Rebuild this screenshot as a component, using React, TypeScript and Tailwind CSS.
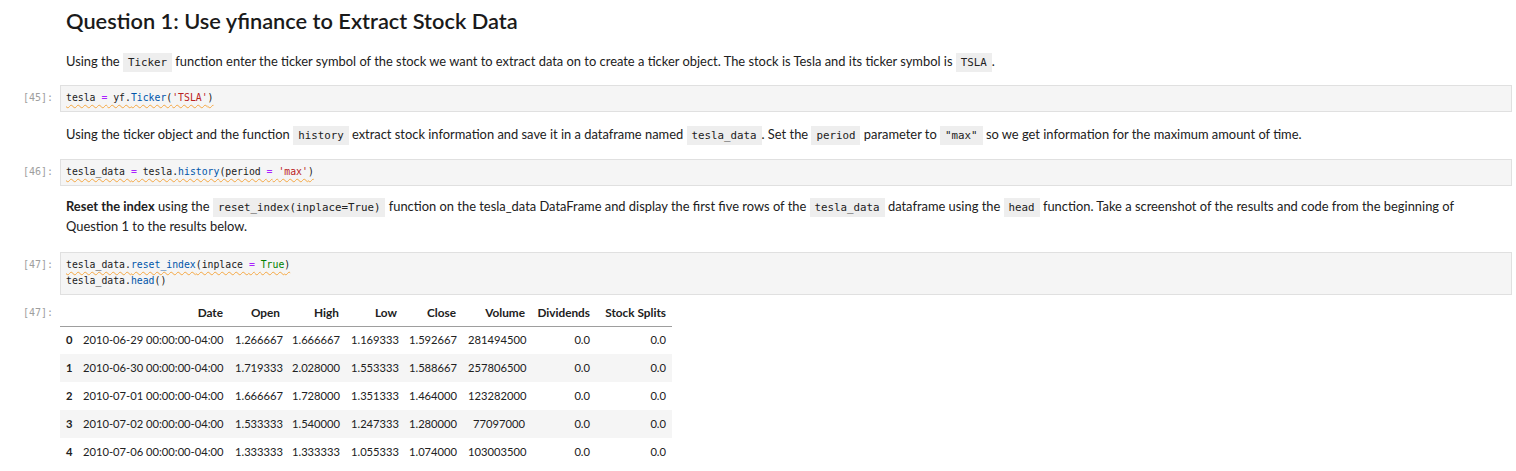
import { ReactNode } from "react";

// notebook-ish bits
const Chip = ({ children }: { children: ReactNode }) => (
  <code className="bg-[#eeeeee] px-[5px] py-[3px] font-['DejaVu_Sans_Mono',monospace] text-[10.8px] leading-none text-[#212121]">
    {children}
  </code>
);

const Prompt = ({ n }: { n: number }) => (
  <div className="w-[60px] shrink-0 pr-[7px] text-right font-['DejaVu_Sans_Mono',monospace] text-[10px] leading-[16px] text-[#9e9e9e]">
    [{n}]:
  </div>
);

const Lint = ({ children }: { children: ReactNode }) => (
  <span className="underline decoration-wavy decoration-[#f5a742] decoration-1 underline-offset-[3px]">
    {children}
  </span>
);

const Op = ({ children }: { children: ReactNode }) => (
  <span className="text-[#aa22ff]">{children}</span>
);
const Prop = ({ children }: { children: ReactNode }) => (
  <span className="text-[#0055aa]">{children}</span>
);
const Str = ({ children }: { children: ReactNode }) => (
  <span className="text-[#ba2121]">{children}</span>
);
const Kw = ({ children }: { children: ReactNode }) => (
  <span className="text-[#008000]">{children}</span>
);

const CodeCell = ({ n, lines }: { n: number; lines: ReactNode[] }) => (
  <div className="flex items-start">
    <div className="pt-[5px]">
      <Prompt n={n} />
    </div>
    <div className="flex-1 bg-[#f5f5f5] border border-[#e0e0e0] px-[5px] pt-[4px] pb-[5px] font-['DejaVu_Sans_Mono',monospace] text-[9.8px] leading-[16px] text-[#212121] whitespace-pre">
      {lines.map((l, i) => (
        <div key={i}>{l}</div>
      ))}
    </div>
  </div>
);

const rows = [
  ["0", "2010-06-29 00:00:00-04:00", "1.266667", "1.666667", "1.169333", "1.592667", "281494500", "0.0", "0.0"],
  ["1", "2010-06-30 00:00:00-04:00", "1.719333", "2.028000", "1.553333", "1.588667", "257806500", "0.0", "0.0"],
  ["2", "2010-07-01 00:00:00-04:00", "1.666667", "1.728000", "1.351333", "1.464000", "123282000", "0.0", "0.0"],
  ["3", "2010-07-02 00:00:00-04:00", "1.533333", "1.540000", "1.247333", "1.280000", "77097000", "0.0", "0.0"],
  ["4", "2010-07-06 00:00:00-04:00", "1.333333", "1.333333", "1.055333", "1.074000", "103003500", "0.0", "0.0"],
];

const headers = ["", "Date", "Open", "High", "Low", "Close", "Volume", "Dividends", "Stock Splits"];
const widths = ["w-[18px]", "w-[151px]", "w-[57px]", "w-[59px]", "w-[58px]", "w-[59px]", "w-[69px]", "w-[65px]", "w-[76px]"];

export default function App() {
  return (
    <div className="w-[1516px] h-[471px] overflow-hidden bg-white pt-[7px] pr-[4px] font-['Lato',sans-serif] text-[#212121]">
      {/* heading */}
      <div className="pl-[66px]">
        <h2 className="text-[21.8px] leading-[28px] font-semibold text-[#1a1a1a]">
          Question 1: Use yfinance to Extract Stock Data
        </h2>
      </div>

      <p className="pl-[66px] mt-[16px] text-[12.9px] leading-[20px]">
        Using the <Chip>Ticker</Chip> function enter the ticker symbol of the stock we want to extract data on to create a ticker
        object. The stock is Tesla and its ticker symbol is <Chip>TSLA</Chip>.
      </p>

      <div className="mt-[14px]">
        <CodeCell
          n={45}
          lines={[
            <Lint>
              tesla <Op>=</Op> yf.<Prop>Ticker</Prop>(<Str>'TSLA'</Str>)
            </Lint>,
          ]}
        />
      </div>

      <p className="pl-[66px] mt-[12px] text-[12.9px] leading-[20px]">
        Using the ticker object and the function <Chip>history</Chip> extract stock information and save it in a dataframe named{" "}
        <Chip>tesla_data</Chip>. Set the <Chip>period</Chip> parameter to <Chip>"max"</Chip> so we get information for the
        maximum amount of time.
      </p>

      <div className="mt-[15px]">
        <CodeCell
          n={46}
          lines={[
            <Lint>
              tesla_data <Op>=</Op> tesla.<Prop>history</Prop>(period <Op>=</Op> <Str>'max'</Str>)
            </Lint>,
          ]}
        />
      </div>

      <p className="pl-[66px] pr-[40px] mt-[10px] text-[12.9px] leading-[20px]">
        <b className="font-bold">Reset the index</b> using the <Chip>reset_index(inplace=True)</Chip> function on the tesla_data
        DataFrame and display the first five rows of the <Chip>tesla_data</Chip> dataframe using the <Chip>head</Chip> function.
        Take a screenshot of the results and code from the beginning of Question 1 to the results below.
      </p>

      <div className="mt-[16px]">
        <CodeCell
          n={47}
          lines={[
            <Lint>
              tesla_data.<Prop>reset_index</Prop>(inplace <Op>=</Op> <Kw>True</Kw>)
            </Lint>,
            <span>
              tesla_data.<Prop>head</Prop>()
            </span>,
          ]}
        />
      </div>

      {/* output */}
      <div className="flex items-start mt-[5px]">
        <div className="pt-[5px]">
          <Prompt n={47} />
        </div>
        <table className="w-[612px] table-fixed border-collapse text-[11.2px] text-[#212121]">
          <thead>
            <tr className="h-[26px] border-b border-[#9e9e9e]">
              {headers.map((h, i) => (
                <th key={i} className={`${widths[i]} px-[6px] text-right text-[11.8px] font-bold whitespace-nowrap`}>
                  {h}
                </th>
              ))}
            </tr>
          </thead>
          <tbody>
            {rows.map((r, ri) => (
              <tr key={ri} className={`h-[28px] ${ri % 2 === 1 ? "bg-[#f5f5f5]" : ""}`}>
                {r.map((c, ci) => (
                  <td
                    key={ci}
                    className={`px-[6px] whitespace-nowrap ${ci === 0 ? "font-bold text-left" : ci === 1 ? "text-left pl-[5px]" : "text-right"}`}
                  >
                    {c}
                  </td>
                ))}
              </tr>
            ))}
          </tbody>
        </table>
      </div>
    </div>
  );
}
